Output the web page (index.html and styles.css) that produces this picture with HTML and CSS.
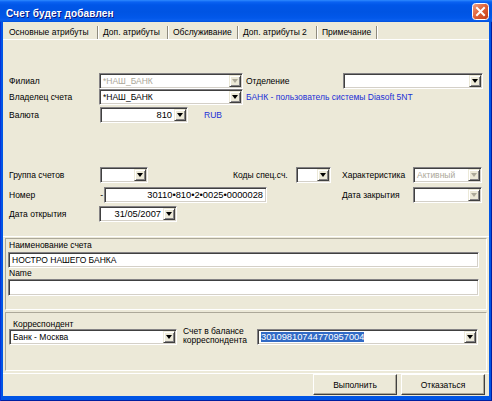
FILE: index.html
```html
<!DOCTYPE html>
<html lang="ru">
<head>
<meta charset="utf-8">
<title>Счет будет добавлен</title>
<link rel="stylesheet" href="styles.css">
</head>
<body>
<div class="window">
  <div class="titlebar">
    <span class="title">Счет будет добавлен</span>
    <span class="close">
      <svg width="17" height="17" viewBox="0 0 17 17">
        <defs>
          <linearGradient id="cg" x1="0" y1="0" x2="1" y2="1">
            <stop offset="0" stop-color="#F0A58A"/>
            <stop offset="0.45" stop-color="#E0653C"/>
            <stop offset="1" stop-color="#C23A12"/>
          </linearGradient>
        </defs>
        <rect x="0.5" y="0.5" width="16" height="16" rx="3" fill="url(#cg)" stroke="#fff"/>
        <path d="M5 5L12 12M12 5L5 12" stroke="#fff" stroke-width="2" stroke-linecap="square"/>
      </svg>
    </span>
  </div>
  <div class="client">
    <div class="tabs">
      <span class="tab t1">Основные атрибуты</span>
      <span class="tab t2">Доп. атрибуты</span>
      <span class="tab t3">Обслуживание</span>
      <span class="tab t4">Доп. атрибуты 2</span>
      <span class="tab t5">Примечание</span>
    </div>
    <div class="sheet">
      <div class="row">
        <span class="lbl">Филиал</span>
        <div class="combo dis w144"><span class="val">*НАШ_БАНК</span><span class="btn"><i></i></span></div>
        <span class="lbl lbl-dept">Отделение</span>
        <div class="combo w140"><span class="val"></span><span class="btn"><i></i></span></div>
      </div>
      <div class="row">
        <span class="lbl">Владелец счета</span>
        <div class="combo w144"><span class="val">*НАШ_БАНК</span><span class="btn"><i></i></span></div>
        <span class="blue info">БАНК - пользователь системы Diasoft 5NT</span>
      </div>
      <div class="row rc">
        <span class="lbl l91">Валюта</span>
        <div class="combo w88"><span class="val num right">810</span><span class="btn"><i></i></span></div>
        <span class="blue rub">RUB</span>
      </div>
      <div class="row rd">
        <span class="lbl l91">Группа счетов</span>
        <div class="combo w48"><span class="val"></span><span class="btn"><i></i></span></div>
        <span class="lbl lbl-codes">Коды спец.сч.</span>
        <div class="combo w35"><span class="val"></span><span class="btn"><i></i></span></div>
        <span class="lbl lbl-char">Характеристика</span>
        <div class="combo dis w69"><span class="val">Активный</span><span class="btn"><i></i></span></div>
      </div>
      <div class="row re">
        <span class="lbl">Номер</span>
        <span class="dash">-</span>
        <div class="edit w163 num right">30110•810•2•0025•0000028</div>
        <span class="lbl lbl-close">Дата закрытия</span>
        <div class="combo dis w69"><span class="val"></span><span class="btn"><i></i></span></div>
      </div>
      <div class="row rf">
        <span class="lbl">Дата открытия</span>
        <div class="combo w78"><span class="val num right">31/05/2007</span><span class="btn"><i></i></span></div>
      </div>
    </div>
    <div class="panel names">
      <div class="cap">Наименование счета</div>
      <div class="edit wide">НОСТРО НАШЕГО БАНКА</div>
      <div class="cap cap-name">Name</div>
      <div class="edit wide tall"></div>
    </div>
    <div class="panel corr">
      <div class="corr-row">
        <div class="corr-left">
          <div class="cap-corr">Корреспондент</div>
          <div class="combo w168"><span class="val">Банк - Москва</span><span class="btn"><i></i></span></div>
        </div>
        <div class="corr-mid">Счет в балансе<br>корреспондента</div>
        <div class="combo w221"><span class="val num"><span class="sel">30109810744770957004</span></span><span class="btn"><i></i></span></div>
      </div>
    </div>
    <div class="bottombar">
      <button class="push" type="button">Выполнить</button>
      <button class="push" type="button">Отказаться</button>
    </div>
  </div>
</div>
</body>
</html>
```
FILE: styles.css
```css
* { box-sizing: border-box; }
html, body { margin: 0; padding: 0; }
body {
  width: 492px;
  height: 401px;
  overflow: hidden;
  font-family: "Liberation Sans", Arial, sans-serif;
  font-size: 8.5px;
  color: #000;
  background: #fff;
}
.window {
  width: 492px;
  height: 401px;
  display: flex;
  flex-direction: column;
  background: #0055E5;
  box-shadow: inset 1px 0 #0831D9, inset -1px 0 #001EA0, inset 0 -1px #001EA0;
}
.titlebar {
  height: 22px;
  flex: none;
  display: flex;
  align-items: flex-start;
  padding: 0 3px 0 6px;
  background: linear-gradient(to bottom, #2E8AFF 0, #0A62F2 2px, #0056E8 5px, #0054E3 12px, #0258EA 18px, #0A5FEE 20px, #0050DC 22px);
}
.title {
  margin-top: 8px;
  line-height: 12px;
  font-size: 10px;
  font-weight: bold;
  color: #fff;
  letter-spacing: 0.15px;
  text-shadow: 1px 1px #0A1883;
  white-space: nowrap;
}
.close {
  margin-left: auto;
  margin-top: 3px;
  width: 17px;
  height: 17px;
  display: block;
}
.close svg { display: block; }
.client {
  flex: 1;
  margin: 0 3px 5px;
  background: #ECE9D8;
  display: flex;
  flex-direction: column;
}
.tabs {
  height: 18px;
  flex: none;
  display: flex;
  border-bottom: 1px solid #fff;
}
.tab {
  margin-top: 4px;
  height: 13px;
  line-height: 13px;
  border-right: 1px solid #8E8B7E;
  box-shadow: 1px 0 0 #fff;
  white-space: nowrap;
  flex: none;
  overflow: hidden;
}
.t1 { width: 95px; padding-left: 6px; }
.t2 { width: 69px; padding-left: 4px; margin-left: 1px; }
.t3 { width: 69px; padding-left: 4px; margin-left: 1px; }
.t4 { width: 78px; padding-left: 4px; margin-left: 1px; }
.t5 { width: 59px; padding-left: 4px; margin-left: 1px; }
.sheet {
  height: 197px;
  flex: none;
  border-bottom: 1px solid #fff;
  padding: 33px 0 0 6px;
}
.row {
  display: flex;
  align-items: center;
  height: 16px;
}
.rc { margin-top: 2px; }
.rd { margin-top: 44px; }
.re { margin-top: 4px; }
.rf { margin-top: 3px; }
.lbl { width: 90px; flex: none; white-space: nowrap; }
.l91 { width: 91px; }
.lbl-dept { width: 97px; margin-left: 3px; }
.lbl-codes { width: 63px; margin-left: 85px; }
.lbl-char { width: 71px; margin-left: 11px; }
.lbl-close { width: 71px; margin-left: 75px; }
.dash { width: 5px; flex: none; text-align: right; padding-right: 1px; }
.blue { color: #1B2FD6; white-space: nowrap; }
.info { margin-left: 3px; }
.rub { margin-left: 16px; }
.combo {
  flex: none;
  height: 16px;
  display: flex;
  background: #fff;
  border: 1px solid;
  border-color: #848284 #fff #fff #848284;
  box-shadow: inset 1px 1px #404040, inset -1px -1px #D4D0C8;
  padding: 1px;
}
.combo .val {
  flex: 1;
  min-width: 0;
  line-height: 12px;
  padding-left: 2px;
  overflow: hidden;
  white-space: nowrap;
}
.combo .btn {
  flex: none;
  width: 12px;
  height: 12px;
  background: #ECE9D8;
  border: 1px solid;
  border-color: #ECE9D8 #404040 #404040 #ECE9D8;
  box-shadow: inset 1px 1px #fff, inset -1px -1px #848284;
  display: flex;
  align-items: center;
  justify-content: center;
}
.combo .btn i {
  display: block;
  width: 1px;
  height: 0;
  border-left: 3px solid transparent;
  border-right: 3px solid transparent;
  border-top: 4px solid #000;
}
.combo.dis .val { color: #ACA899; }
.combo.dis .btn i { border-top-color: #ACA899; }
.num { font-size: 9.3px; }
.right { text-align: right; padding-right: 2px; }
.w144 { width: 144px; }
.w140 { width: 140px; }
.w88 { width: 88px; }
.w48 { width: 48px; }
.w35 { width: 35px; }
.w69 { width: 69px; }
.w78 { width: 78px; }
.w168 { width: 168px; }
.w221 { width: 221px; }
.edit {
  flex: none;
  height: 16px;
  background: #fff;
  border: 1px solid;
  border-color: #848284 #fff #fff #848284;
  box-shadow: inset 1px 1px #404040, inset -1px -1px #D4D0C8;
  line-height: 12px;
  padding: 1px 3px;
  white-space: nowrap;
  overflow: hidden;
}
.w163 { width: 163px; }
.panel {
  flex: none;
  margin: 0 2px;
  border: 1px solid;
  border-color: #ACA899 #fff #fff #ACA899;
}
.names {
  margin-top: 1px;
  height: 72px;
  padding: 1px 0 0 2px;
}
.cap {
  height: 12px;
  line-height: 11px;
  margin-left: 1px;
  white-space: nowrap;
}
.cap-name { height: 11px; }
.wide { width: 471px; }
.tall { height: 17px; }
.corr {
  margin-top: 2px;
  height: 59px;
  padding: 7px 0 0 3px;
}
.corr-row {
  display: flex;
  align-items: flex-end;
}
.corr-left { width: 168px; flex: none; }
.cap-corr {
  height: 9px;
  line-height: 9px;
  margin-left: 4px;
  white-space: nowrap;
}
.corr-mid {
  width: 74px;
  flex: none;
  margin-left: 6px;
  line-height: 9px;
  height: 18px;
  white-space: nowrap;
}
.sel { background: #316AC5; color: #fff; }
.bottombar {
  margin-top: 2px;
  height: 23px;
  flex: none;
  border-top: 1px solid #fff;
  display: flex;
  justify-content: flex-end;
  gap: 4px;
  padding-right: 4px;
}
.push {
  width: 84px;
  height: 21px;
  font: inherit;
  color: #000;
  background: #ECE9D8;
  border: 1px solid;
  border-color: #fff #404040 #404040 #fff;
  box-shadow: inset -1px -1px #ACA899;
  padding: 0;
  margin: 0;
}
```
